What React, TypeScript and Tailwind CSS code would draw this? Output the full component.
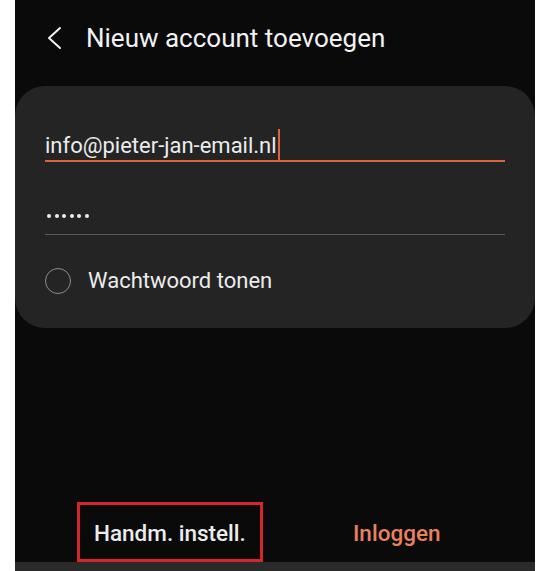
import { useState } from "react";

// Samsung-style "add account" sheet: header, credentials card, bottom actions.

const ORANGE = "#d9653c";

function BackChevron() {
  return (
    <svg width="16" height="24" viewBox="0 0 16 24" className="shrink-0">
      <polyline
        points="13,2 2,12 13,22"
        fill="none"
        stroke="#f2f2f2"
        strokeWidth="2"
        strokeLinecap="round"
        strokeLinejoin="round"
      />
    </svg>
  );
}

export default function App() {
  const [showPw, setShowPw] = useState(false);

  return (
    <div
      className="w-[550px] h-[571px] bg-white flex justify-center overflow-hidden"
      style={{ fontFamily: "Roboto, 'Noto Sans', sans-serif" }}
    >
      <div className="w-[520px] h-full bg-[#0a0a0a] flex flex-col">
        {/* header */}
        <div className="h-[86px] shrink-0 flex items-start gap-[23px] pl-[32px] pt-[22px]">
          <div className="h-[32px] flex items-center">
            <BackChevron />
          </div>
          <h1 className="text-[26px] leading-[32px] text-[#f2f2f2] font-normal">
            Nieuw account toevoegen
          </h1>
        </div>

        {/* credentials card */}
        <div className="h-[242px] shrink-0 rounded-[30px] bg-[#242424] px-[30px] flex flex-col">
          <div className="mt-[43px] pb-[3px] border-b-2 border-[#d9653c]">
            <div className="h-[28px] text-[22px] leading-[28px] text-[#ececec] whitespace-nowrap">
              info@pieter-jan-email.nl
              <span
                className="inline-block w-[2px] h-[32px] ml-[1px] align-[-8px]"
                style={{ background: ORANGE }}
              />
            </div>
          </div>

          <div className="mt-[52px] pb-[16px] border-b border-[#575757]">
            <div className="h-[4px] flex items-center gap-[3.5px] pl-[2px]">
              {Array.from({ length: 6 }).map((_, i) => (
                <span key={i} className="w-[4px] h-[4px] rounded-full bg-[#ececec]" />
              ))}
            </div>
          </div>

          <button
            type="button"
            onClick={() => setShowPw(!showPw)}
            className="mt-[33px] h-[26px] flex items-center gap-[17px] text-left cursor-pointer"
          >
            <span
              className={
                showPw
                  ? "w-[26px] h-[26px] rounded-full border-[1.5px] border-[#d9653c] bg-[#d9653c]"
                  : "w-[26px] h-[26px] rounded-full border-[1.5px] border-[#8c8c8c]"
              }
            />
            <span className="text-[22px] leading-[28px] text-[#ececec]">Wachtwoord tonen</span>
          </button>
        </div>

        <div className="flex-1" />

        {/* bottom actions */}
        <div className="h-[60px] shrink-0 flex items-stretch pl-[62px]">
          <button
            type="button"
            className="w-[186px] border-[3px] border-[#d4262b] pl-[14px] pt-[3px] text-left text-[22.5px] font-medium text-[#ececec] cursor-pointer"
          >
            Handm. instell.
          </button>
          <button
            type="button"
            className="ml-[90px] pt-[3px] text-[22.5px] font-medium text-[#e8825c] cursor-pointer"
          >
            Inloggen
          </button>
        </div>
        <div className="h-[9px] shrink-0 bg-[#2a2a2a]" />
      </div>
    </div>
  );
}
